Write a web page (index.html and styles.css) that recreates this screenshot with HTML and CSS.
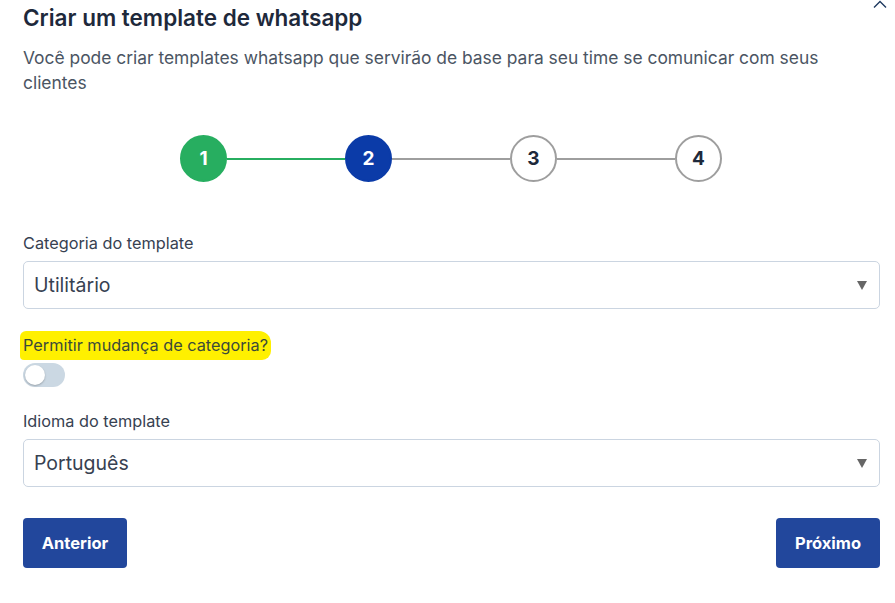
FILE: index.html
```html
<!DOCTYPE html>
<html lang="pt-BR">
<head>
	<meta charset="UTF-8">
	<title>Criar um template de whatsapp</title>
	<link rel="stylesheet" href="styles.css">
</head>
<body>
	<div class="modal">
		<svg class="collapse" width="14" height="8" viewBox="0 0 14 8"><path d="M1 7.5 L7 1.5 L13 7.5" fill="none" stroke="#1e3a5f" stroke-width="1.4"/></svg>
		<h1 class="title">Criar um template de whatsapp</h1>
		<p class="subtitle">Você pode criar templates whatsapp que servirão de base para seu time se comunicar com seus clientes</p>

		<div class="stepper">
			<div class="step done">1</div>
			<div class="bar done"></div>
			<div class="step current">2</div>
			<div class="bar"></div>
			<div class="step">3</div>
			<div class="bar"></div>
			<div class="step">4</div>
		</div>

		<div class="field">
			<label class="label">Categoria do template</label>
			<div class="select">
				<span>Utilitário</span>
				<span class="caret"></span>
			</div>
		</div>

		<div class="field switch-field">
			<label class="label"><span class="marker">Permitir mudança de categoria?</span></label>
			<div class="switch"><div class="knob"></div></div>
		</div>

		<div class="field">
			<label class="label">Idioma do template</label>
			<div class="select">
				<span>Português</span>
				<span class="caret"></span>
			</div>
		</div>

		<div class="actions">
			<button class="button">Anterior</button>
			<button class="button">Próximo</button>
		</div>
	</div>
</body>
</html>
```

FILE: styles.css
```css
body {
	margin: 0;
	background: #fff;
	font-family: Inter, "Noto Sans", sans-serif;
	color: #1f2937;
}
.modal {
	position: relative;
	padding: 3px 15px 0 23px;
}
.collapse {
	position: absolute;
	top: 0;
	right: 8px;
}
.title {
	margin: 0;
	font-size: 22.5px;
	font-weight: 600;
	line-height: 30px;
	color: #1e293b;
}
.subtitle {
	margin: 12px 0 0;
	font-size: 17.4px;
	line-height: 25px;
	color: #4b5563;
	padding-right: 40px;
}
.stepper {
	display: flex;
	align-items: center;
	padding: 40px 0 0 157px;
	width: 542px;
}
.step {
	flex: none;
	width: 43px;
	height: 43px;
	border: 2px solid #9e9e9e;
	border-radius: 50%;
	display: flex;
	align-items: center;
	justify-content: center;
	font-size: 19px;
	font-weight: 700;
	color: #1e293b;
	background: #fff;
}
.step.done {
	background: #27ae60;
	border-color: #27ae60;
	color: #fff;
}
.step.current {
	background: #0b3ba8;
	border-color: #0b3ba8;
	color: #fff;
}
.bar {
	flex: 1;
	height: 2px;
	background: #9e9e9e;
}
.bar.done {
	background: #27ae60;
}
.field {
	margin-top: 50px;
}
.label {
	display: block;
	font-size: 16.3px;
	line-height: 22px;
	color: #374151;
	margin-bottom: 7px;
}
.select {
	height: 46px;
	border: 1px solid #cbd5e1;
	border-radius: 5px;
	display: flex;
	align-items: center;
	justify-content: space-between;
	padding: 0 12px 0 10px;
	font-size: 19.5px;
	color: #374151;
}
.caret {
	width: 0;
	height: 0;
	border-left: 5px solid transparent;
	border-right: 5px solid transparent;
	border-top: 9px solid #666;
}
.switch-field {
	margin-top: 25px;
}
.switch-field .label {
	margin-bottom: 7px;
}
.marker {
	background: #fff000;
	padding: 4px 3px 5px 3px;
	margin-left: -3px;
	border-radius: 6px 12px 9px 4px;
	color: #3b4a3a;
}
.switch {
	width: 42px;
	height: 24px;
	border-radius: 12px;
	background: #cbd8e3;
	display: flex;
	align-items: center;
	padding-left: 2px;
	box-sizing: border-box;
}
.knob {
	width: 20px;
	height: 20px;
	border-radius: 50%;
	background: #fff;
	box-shadow: 0 1px 2px rgba(0,0,0,0.25);
}
.switch-field + .field {
	margin-top: 23px;
}
.actions {
	display: flex;
	justify-content: space-between;
	margin-top: 31px;
}
.button {
	background: #22479c;
	color: #fff;
	border: none;
	border-radius: 4px;
	height: 50px;
	width: 104px;
	font-family: Inter, sans-serif;
	font-size: 16.5px;
	font-weight: 700;
	cursor: pointer;
}
```
